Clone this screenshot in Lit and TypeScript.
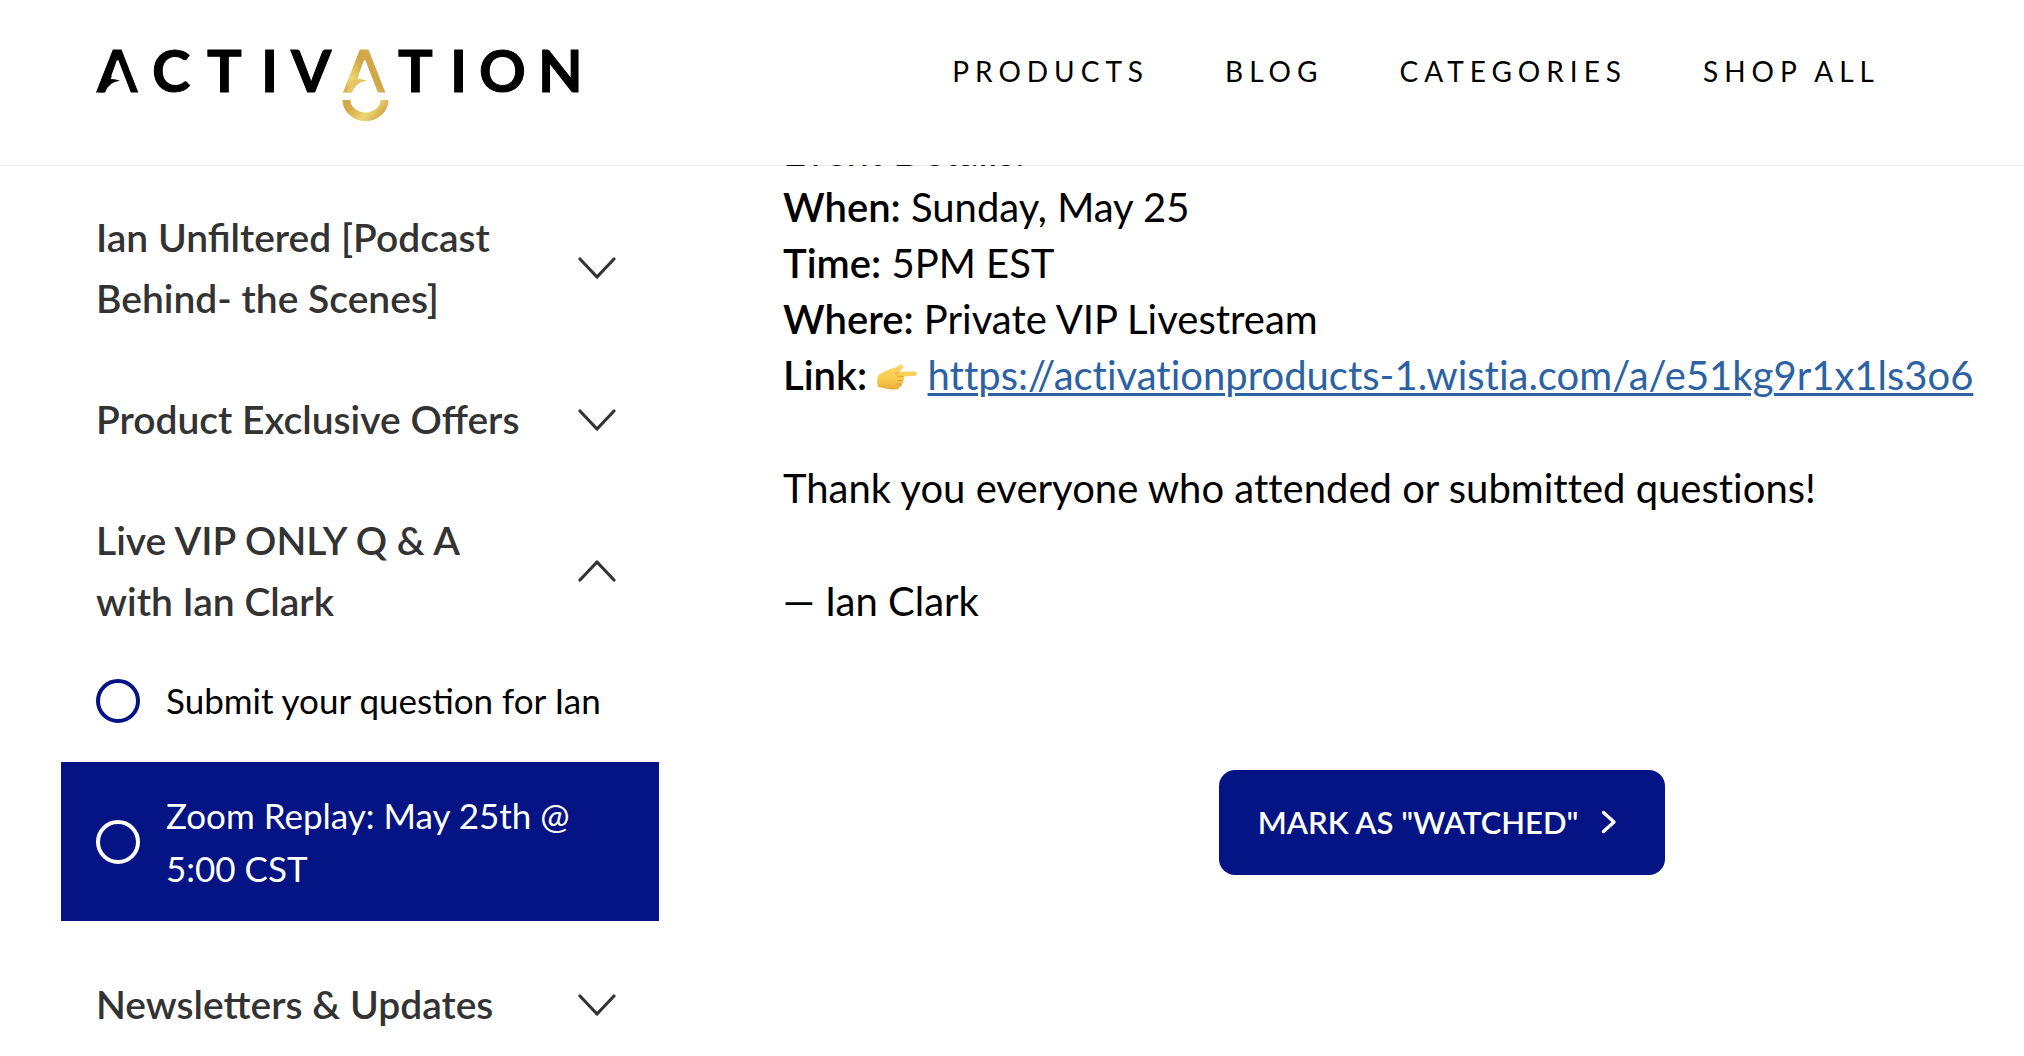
import { LitElement, html, css, svg } from "lit";
import { customElement, property } from "lit/decorators.js";

@customElement("brand-logo")
export class BrandLogo extends LitElement {
  static styles = css`
    :host { display: block; }
    .logo { display: block; width: 488px; height: 76px; overflow: visible; }
    .word { font-family: Lato, "Liberation Sans", sans-serif; font-size: 58px; font-weight: 700; fill: #000; stroke: #000; stroke-width: 1px; }
    .gold { fill: url(#gold); stroke: url(#gold); }
  `;

  render() {
    return html`
      <svg class="logo" viewBox="0 0 488 76" role="img" aria-label="Activation">
        <defs>
          <linearGradient id="gold" gradientUnits="userSpaceOnUse" x1="250" y1="46" x2="290" y2="14">
            <stop offset="0" stop-color="#d9b04c" />
            <stop offset="0.25" stop-color="#edd774" />
            <stop offset="0.6" stop-color="#cfa647" />
            <stop offset="1" stop-color="#d4af50" />
          </linearGradient>
          <linearGradient id="smile" x1="0" y1="0" x2="1" y2="0.4">
            <stop offset="0" stop-color="#d2a646" />
            <stop offset="0.3" stop-color="#d6ac4a" />
            <stop offset="0.68" stop-color="#eed674" />
            <stop offset="1" stop-color="#d2a646" />
          </linearGradient>
        </defs>
        <text class="word" y="46" x="1 56 111 165 195">ACTIV</text>
        <text class="word gold" y="46" x="248">A</text>
        <text class="word" y="46" x="302 354 383 442">TION</text>
        ${[0, 247].map(
          (x) => svg`
            <path fill="#fff" transform="translate(${x} 0)" d="M22.3 14 L35 47 H9 Z" />
            <path fill=${x ? "#e6c562" : "#000"} transform="translate(${x} 0)"
              d="M4 46.500 H9 Q12.500 36 24 34.700 Q19 32.600 14.300 33 L9 34 Z" />`
        )}
        <path fill="url(#smile)" d="M246.500 54 H254.500 A15 12.500 0 0 0 284.500 54 H292.500 A23 21 0 0 1 246.500 54 Z" />
      </svg>
    `;
  }
}

@customElement("chevron-icon")
export class ChevronIcon extends LitElement {
  @property() direction = "down";

  static styles = css`
    :host { display: block; flex: none; }
    .icon { display: block; fill: none; stroke: currentColor; stroke-linecap: round; stroke-linejoin: round; }
  `;

  render() {
    if (this.direction === "right") {
      return html`<svg class="icon" width="16" height="24" viewBox="0 0 16 24" stroke-width="3.400" aria-hidden="true">
        <path d="M2.500 2.500 L13 12 L2.500 21.500" />
      </svg>`;
    }
    const d = this.direction === "up" ? "M2 20 L19 2 L36 20" : "M2 2 L19 20 L36 2";
    return html`<svg class="icon" width="38" height="22" viewBox="0 0 38 22" stroke-width="3.200" aria-hidden="true">
      <path d=${d} />
    </svg>`;
  }
}

interface Lesson { title: string; active?: boolean }
interface Section { title: string; lessons?: Lesson[] }

const NAV = ["PRODUCTS", "BLOG", "CATEGORIES", "SHOP ALL"];

const SECTIONS: Section[] = [
  { title: "Ian Unfiltered [Podcast Behind- the Scenes]" },
  { title: "Product Exclusive Offers" },
  {
    title: "Live VIP ONLY Q & A with Ian Clark",
    lessons: [
      { title: "Submit your question for Ian" },
      { title: "Zoom Replay: May 25th @ 5:00 CST", active: true },
    ],
  },
  { title: "Newsletters & Updates" },
];

const VIDEO_URL = "https://activationproducts-1.wistia.com/a/e51kg9r1x1ls3o6";

@customElement("app-root")
export class AppRoot extends LitElement {
  static styles = css`
    :host {
      display: block;
      min-height: 100vh;
      background: #fff;
      color: #000;
      font-family: Lato, "Liberation Sans", sans-serif;
    }
    * { box-sizing: border-box; }
    a { color: inherit; }
    button { font: inherit; color: inherit; border: 0; background: none; cursor: pointer; }

    .header {
      position: sticky;
      top: 0;
      z-index: 1;
      display: flex;
      justify-content: space-between;
      align-items: flex-start;
      height: 165px;
      padding: 46px 144px 0 96px;
      background: #fff;
      box-shadow: 0 1px 0 rgba(0, 0, 0, 0.08);
    }
    .home { display: block; }
    .nav { display: flex; gap: 76px; padding-top: 5px; }
    .nav-link { font-size: 28px; line-height: 40px; letter-spacing: 6px; text-decoration: none; white-space: nowrap; }

    .body {
      display: grid;
      grid-template-columns: 598px minmax(0, 1fr);
      column-gap: 124px;
      padding: 0 44px 0 61px;
    }

    .sidebar { padding-top: 12px; color: #333; }
    .section-toggle {
      display: flex;
      align-items: center;
      justify-content: space-between;
      gap: 40px;
      width: 100%;
      padding: 30px 43px 30px 35px;
      font-size: 39px;
      font-weight: 600;
      line-height: 61px;
      text-align: left;
    }
    .open { padding-bottom: 15px; }
    .lessons {
      display: flex;
      flex-direction: column;
      gap: 9px;
      margin: 0 0 23px;
      padding: 0;
      list-style: none;
    }
    .lesson {
      display: flex;
      align-items: center;
      gap: 26px;
      padding: 27px 40px 26px 35px;
      color: #000;
      font-size: 35px;
      line-height: 53px;
      text-decoration: none;
    }
    .ring { flex: none; width: 44px; height: 44px; border: 4px solid #041484; border-radius: 50%; }
    .active { background: #041484; color: #fff; }
    .active .ring { border-color: #fff; }

    .article { margin-top: -42px; font-size: 40px; line-height: 56px; }
    .text { margin: 0 0 57px; font-variant-ligatures: none; }
    .text strong { font-weight: 600; }
    .hand { width: 40px; height: 26px; }
    .video-link {
      color: #2c62a3;
      text-decoration-thickness: 3px;
      text-underline-offset: 3px;
      white-space: nowrap;
    }
    .actions { display: flex; justify-content: center; padding: 84px 0 0 121px; }
    .watched {
      display: flex;
      align-items: center;
      gap: 23px;
      height: 105px;
      padding: 0 48px 2px 39px;
      border-radius: 16px;
      background: #041484;
      color: #fff;
      font-size: 31px;
      font-weight: 600;
      white-space: nowrap;
    }
  `;

  private renderSection(section: Section) {
    const open = !!section.lessons;
    return html`
      <button class="section-toggle ${open ? "open" : ""}" type="button" aria-expanded=${open ? "true" : "false"}>
        <span>${section.title}</span>
        <chevron-icon direction=${open ? "up" : "down"}></chevron-icon>
      </button>
      ${section.lessons
        ? html`<ul class="lessons">
            ${section.lessons.map(
              (lesson) => html`<li>
                <a class="lesson ${lesson.active ? "active" : ""}" href="#">
                  <span class="ring"></span><span>${lesson.title}</span>
                </a>
              </li>`
            )}
          </ul>`
        : null}
    `;
  }

  private renderHand() {
    return html`<svg class="hand" viewBox="0 0 40 26" role="img" aria-label="Link">
      <defs>
        <linearGradient id="skin" x1="0" y1="0" x2="0" y2="1">
          <stop offset="0" stop-color="#fbd763" />
          <stop offset="0.6" stop-color="#f9cb4d" />
          <stop offset="1" stop-color="#e9ab35" />
        </linearGradient>
      </defs>
      <path fill="url(#skin)"
        d="M1 12 C4 8 9 8 13 5 C17 4 20 3 23 1 C25 -0.300 27 1.500 26 3.500 C25.300 5 23.500 6.300 22 7.800 L37.500 7.600 C40.300 7.800 40.300 11.500 37.500 11.800 L26.500 12.500 C27.500 14 27 15.500 26 16.200 C26.700 18 26 19.400 24.700 20 C25 22 24 23 22.500 23.300 C22 25 20 25.500 17 25.400 C12 25.400 8 24.600 5 23.600 C3.500 23.200 2 23.800 1.500 23 C-0.200 20 -0.200 15 1 12 Z" />
      <path fill="none" stroke="#dd9a2e" stroke-width="0.900" stroke-linecap="round"
        d="M26.300 12.500 L20 12.200 M26 16.300 L20.500 16.500 M24.500 20.100 L19.800 20.200 M22 7.800 C20.500 9 19.500 9.500 18 9.800" />
    </svg>`;
  }

  render() {
    return html`
      <header class="header">
        <a class="home" href="#" aria-label="Activation"><brand-logo></brand-logo></a>
        <nav class="nav">${NAV.map((label) => html`<a class="nav-link" href="#">${label}</a>`)}</nav>
      </header>
      <div class="body">
        <aside class="sidebar">${SECTIONS.map((section) => this.renderSection(section))}</aside>
        <main class="article">
          <p class="text">
            Event Details:<br />
            <strong>When:</strong> Sunday, May 25<br />
            <strong>Time:</strong> 5PM EST<br />
            <strong>Where:</strong> Private VIP Livestream<br />
            <strong>Link:</strong> ${this.renderHand()} <a class="video-link" href=${VIDEO_URL}>${VIDEO_URL}</a>
          </p>
          <p class="text">Thank you everyone who attended or submitted questions!</p>
          <p class="text">— Ian Clark</p>
          <div class="actions">
            <button class="watched" type="button">
              MARK AS "WATCHED" <chevron-icon direction="right"></chevron-icon>
            </button>
          </div>
        </main>
      </div>
    `;
  }
}
